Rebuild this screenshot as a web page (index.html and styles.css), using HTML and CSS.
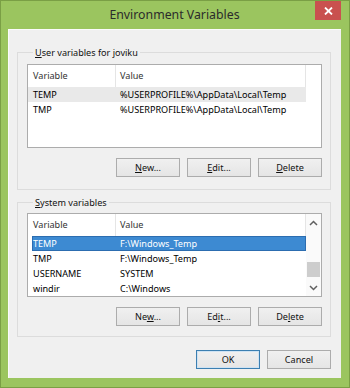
FILE: index.html
```html
<!DOCTYPE html>
<html>
<head>
<meta charset="utf-8">
<link rel="stylesheet" href="styles.css">
</head>
<body>
<div class="window">
  <div class="titlebar">
    <div class="tb-side"></div>
    <div class="title">Environment Variables</div>
    <div class="tb-side tb-right">
      <div class="close">
        <svg width="9" height="8" viewBox="0 0 9 8"><path d="M1 0.5 L8 7.5 M8 0.5 L1 7.5" stroke="#fff" stroke-width="1.8" fill="none"/></svg>
      </div>
    </div>
  </div>
  <div class="client">
    <section class="group group-user">
      <div class="group-label"><u>U</u>ser variables for joviku</div>
      <div class="list">
        <div class="list-main">
          <div class="row head"><span class="c1">Variable</span><span class="c2">Value</span></div>
          <div class="row sel-inactive"><span class="c1">TEMP</span><span class="c2">%USERPROFILE%\AppData\Local\Temp</span></div>
          <div class="row"><span class="c1">TMP</span><span class="c2">%USERPROFILE%\AppData\Local\Temp</span></div>
        </div>
      </div>
      <div class="btns">
        <div class="btn"><u>N</u>ew...</div>
        <div class="btn"><u>E</u>dit...</div>
        <div class="btn"><u>D</u>elete</div>
      </div>
    </section>
    <section class="group group-sys">
      <div class="group-label"><u>S</u>ystem variables</div>
      <div class="list">
        <div class="list-main">
          <div class="row head"><span class="c1">Variable</span><span class="c2">Value</span></div>
          <div class="row sel"><span class="c1">TEMP</span><span class="c2">F:\Windows_Temp</span></div>
          <div class="row"><span class="c1">TMP</span><span class="c2">F:\Windows_Temp</span></div>
          <div class="row"><span class="c1">USERNAME</span><span class="c2">SYSTEM</span></div>
          <div class="row"><span class="c1">windir</span><span class="c2">C:\Windows</span></div>
        </div>
        <div class="scrollbar">
          <div class="arrow">
            <svg width="9" height="6" viewBox="0 0 9 6"><path d="M1 5 L4.5 1.5 L8 5" stroke="#606060" stroke-width="1.5" fill="none"/></svg>
          </div>
          <div class="track"><div class="thumb"></div></div>
          <div class="arrow">
            <svg width="9" height="6" viewBox="0 0 9 6"><path d="M1 1 L4.5 4.5 L8 1" stroke="#606060" stroke-width="1.5" fill="none"/></svg>
          </div>
        </div>
      </div>
      <div class="btns">
        <div class="btn">Ne<u>w</u>...</div>
        <div class="btn">Ed<u>i</u>t...</div>
        <div class="btn">De<u>l</u>ete</div>
      </div>
    </section>
    <div class="dlg-btns">
      <div class="btn btn-default">OK</div>
      <div class="btn">Cancel</div>
    </div>
  </div>
</div>
</body>
</html>
```

FILE: styles.css
```css
* { box-sizing: border-box; }
html, body { margin: 0; padding: 0; background: #fff; }
body {
  font-family: "Noto Sans", "Open Sans", sans-serif;
  font-size: 9.1px;
  color: #000;
}
.window {
  width: 350px;
  height: 388px;
  background: #9bc55f;
  border: 1px solid #7a9f45;
  padding: 0 8px 9px 7px;
  display: flex;
  flex-direction: column;
}
.titlebar {
  height: 28px;
  display: grid;
  grid-template-columns: 1fr auto 1fr;
  align-items: start;
}
.title {
  font-size: 12.3px;
  color: #2b2b2b;
  line-height: 28px;
}
.tb-right { display: flex; justify-content: flex-end; }
.close {
  width: 26px;
  height: 19px;
  background: #c9514f;
  display: flex;
  align-items: center;
  justify-content: center;
}
.client {
  flex: 1;
  background: #f0f0f0;
  box-shadow: inset 1px 1px 0 #fbfbfb;
  padding: 23px 10px 0 9px;
  display: flex;
  flex-direction: column;
}
.group {
  border: 1px solid #dcdcdc;
  padding: 0 8px 0 9px;
  display: flex;
  flex-direction: column;
}
.group-user { padding-bottom: 12px; }
.group-sys { margin-top: 12px; padding-bottom: 10px; }
.group-label {
  align-self: flex-start;
  margin: -8px 0 0 6px;
  padding: 0 2px;
  line-height: 16px;
  height: 16px;
  background: #f0f0f0;
  color: #111;
}
.list {
  margin-top: 3px;
  height: 84px;
  background: #fff;
  border: 1px solid #acacac;
  display: flex;
}
.group-sys .list { margin-top: 2px; }
.list-main { flex: 1; }
.row {
  display: grid;
  grid-template-columns: 88px 190px;
  height: 15px;
  line-height: 15px;
  width: 278px;
}
.row span {
  padding-left: 5px;
  white-space: nowrap;
  overflow: hidden;
}
.row.head {
  height: 22px;
  line-height: 22px;
  color: #333;
}
.row.head span { border-right: 1px solid #e5e5e5; }
.row .c2 { padding-left: 4px; }
.sel-inactive { background: #e9e9e9; }
.sel {
  margin-left: 4px;
  width: 274px;
  grid-template-columns: 84px 190px;
  background: #3d8ad2;
  color: #fff;
  box-shadow: inset 0 0 0 1px #2c6db0;
}
.sel .c1 { padding-left: 1px; }
.scrollbar {
  width: 16px;
  background: #fafafa;
  display: flex;
  flex-direction: column;
}
.arrow {
  height: 17px;
  display: flex;
  align-items: center;
  justify-content: center;
}
.track {
  flex: 1;
  padding-top: 31px;
}
.thumb {
  margin: 0 1px;
  height: 15px;
  background: #cdcdcd;
}
.btns {
  margin-top: 10px;
  display: flex;
  justify-content: flex-end;
  gap: 7px;
}
.btn {
  width: 64px;
  height: 19px;
  border: 1px solid #acacac;
  background: linear-gradient(#f0f0f0, #e5e5e5);
  text-align: center;
  line-height: 17px;
  color: #111;
}
.btn u { text-underline-offset: 1px; }
.dlg-btns {
  margin-top: 13px;
  display: flex;
  justify-content: flex-end;
  gap: 7px;
}
.btn-default {
  border-color: #3c7fb1;
  box-shadow: inset 0 0 0 1px #cfe3f3;
}
```
